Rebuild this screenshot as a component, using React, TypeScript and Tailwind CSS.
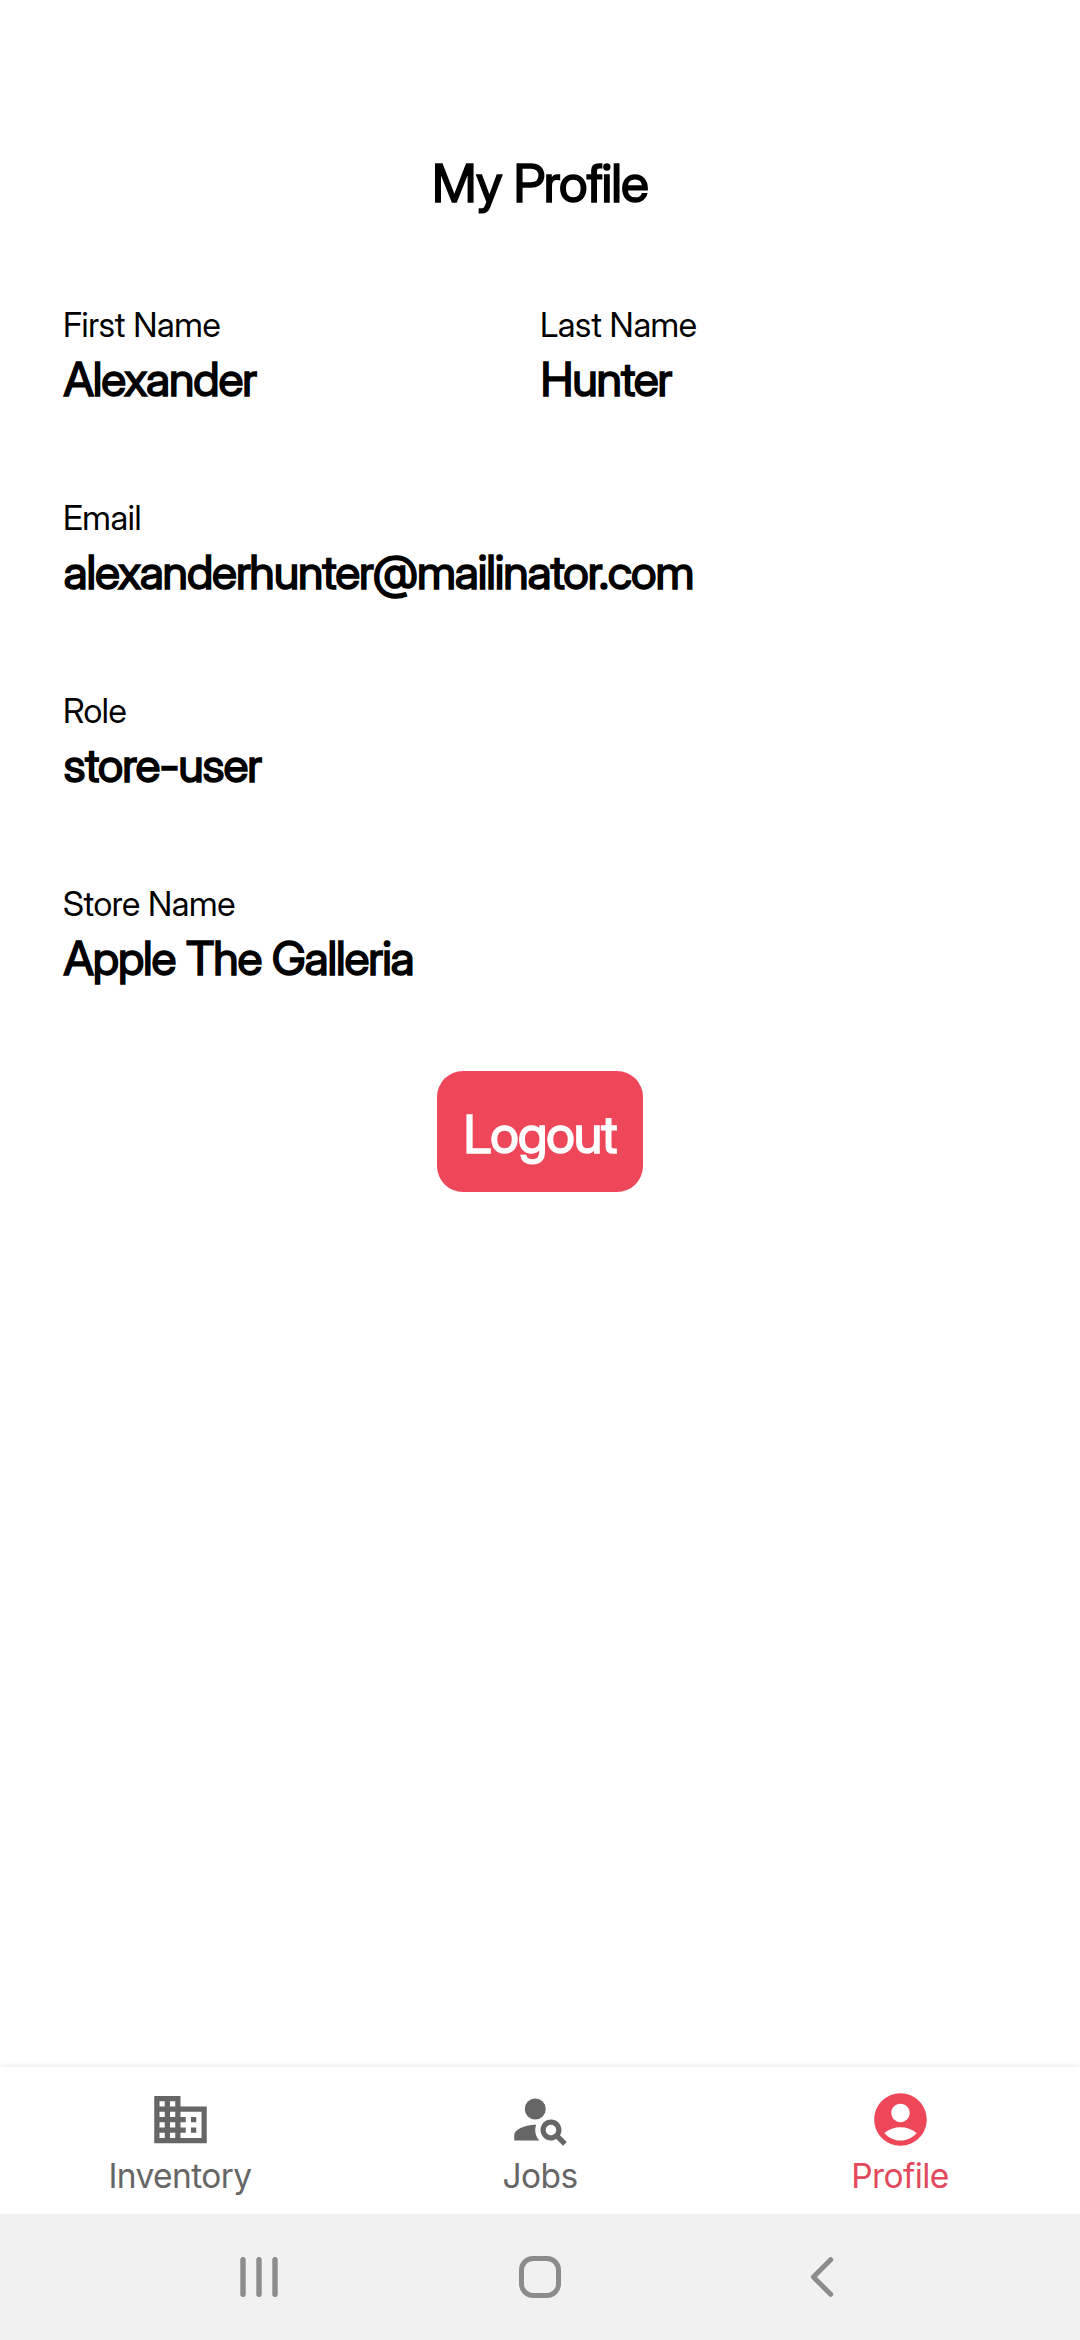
import React from "react";
import type { IconType } from "react-icons";
import { MdAccountCircle, MdBusiness, MdPersonSearch } from "react-icons/md";

function Field({ label, value }: { label: string; value: string }) {
  return (
    <div className="h-[193px] shrink-0 whitespace-nowrap">
      <div className="h-[50px] text-[34px] leading-[51px] tracking-[-0.35px]">{label}</div>
      <div className="pl-[0.5px] text-[46.5px] leading-[60px] tracking-[-1.12px] [-webkit-text-stroke:1.5px_currentColor]">
        {value}
      </div>
    </div>
  );
}

function Tab({ icon: Icon, label, active = false }: { icon: IconType; label: string; active?: boolean }) {
  return (
    <div className={`flex flex-1 flex-col items-center pt-[21px] ${active ? "text-[#ef475a]" : "text-[#666666]"}`}>
      <Icon size={63} />
      <span
        className={`font-['Inter',sans-serif] text-[33.5px] leading-[50px] tracking-[-0.6px] ${active ? "text-[#e24a5b]" : ""}`}
      >
        {label}
      </span>
    </div>
  );
}

export default function App() {
  return (
    <div className="flex h-[2340px] w-[1080px] flex-col overflow-hidden bg-white font-['Inter_Display','Inter',sans-serif] text-black">
      <h1 className="mt-[148px] text-center text-[52px] leading-[72px] tracking-[-1px] [-webkit-text-stroke:1.5px_currentColor]">
        My Profile
      </h1>
      <main className="mt-[79px] flex flex-col px-[63px]">
        <div className="grid grid-cols-2">
          <Field label="First Name" value="Alexander" />
          <Field label="Last Name" value="Hunter" />
        </div>
        <Field label="Email" value="alexanderhunter@mailinator.com" />
        <Field label="Role" value="store-user" />
        <Field label="Store Name" value="Apple The Galleria" />
      </main>
      <button className="mx-auto h-[121px] w-[206px] rounded-[26px] bg-[#ef475a] pt-[6px] text-[52px] tracking-[-1px] text-white [-webkit-text-stroke:1.5px_currentColor]">
        Logout
      </button>
      <nav className="mt-auto flex h-[147px] bg-white shadow-[0_0_8px_rgba(0,0,0,0.1)]">
        <Tab icon={MdBusiness} label="Inventory" />
        <Tab icon={MdPersonSearch} label="Jobs" />
        <Tab icon={MdAccountCircle} label="Profile" active />
      </nav>
      <footer className="relative flex h-[126px] items-center bg-[#f1f1f1] pl-[240px]">
        <svg width="38" height="42" viewBox="0 0 38 42" stroke="#8c8c8c" strokeWidth="5.4" strokeLinecap="round">
          <path d="M3 3.7v34.6M19 3.7v34.6M35 3.7v34.6" />
        </svg>
        <svg className="ml-[241px]" width="42" height="42" viewBox="0 0 42 42" fill="none" stroke="#8c8c8c" strokeWidth="5">
          <rect x="2.5" y="2.5" width="37" height="37" rx="11.5" />
        </svg>
        <svg
          className="ml-[249px]"
          width="24"
          height="42"
          viewBox="0 0 24 42"
          fill="none"
          stroke="#8c8c8c"
          strokeWidth="5"
          strokeLinecap="round"
          strokeLinejoin="round"
        >
          <path d="M20.7 3.7 3.4 21l17.3 17.3" />
        </svg>
      </footer>
    </div>
  );
}
